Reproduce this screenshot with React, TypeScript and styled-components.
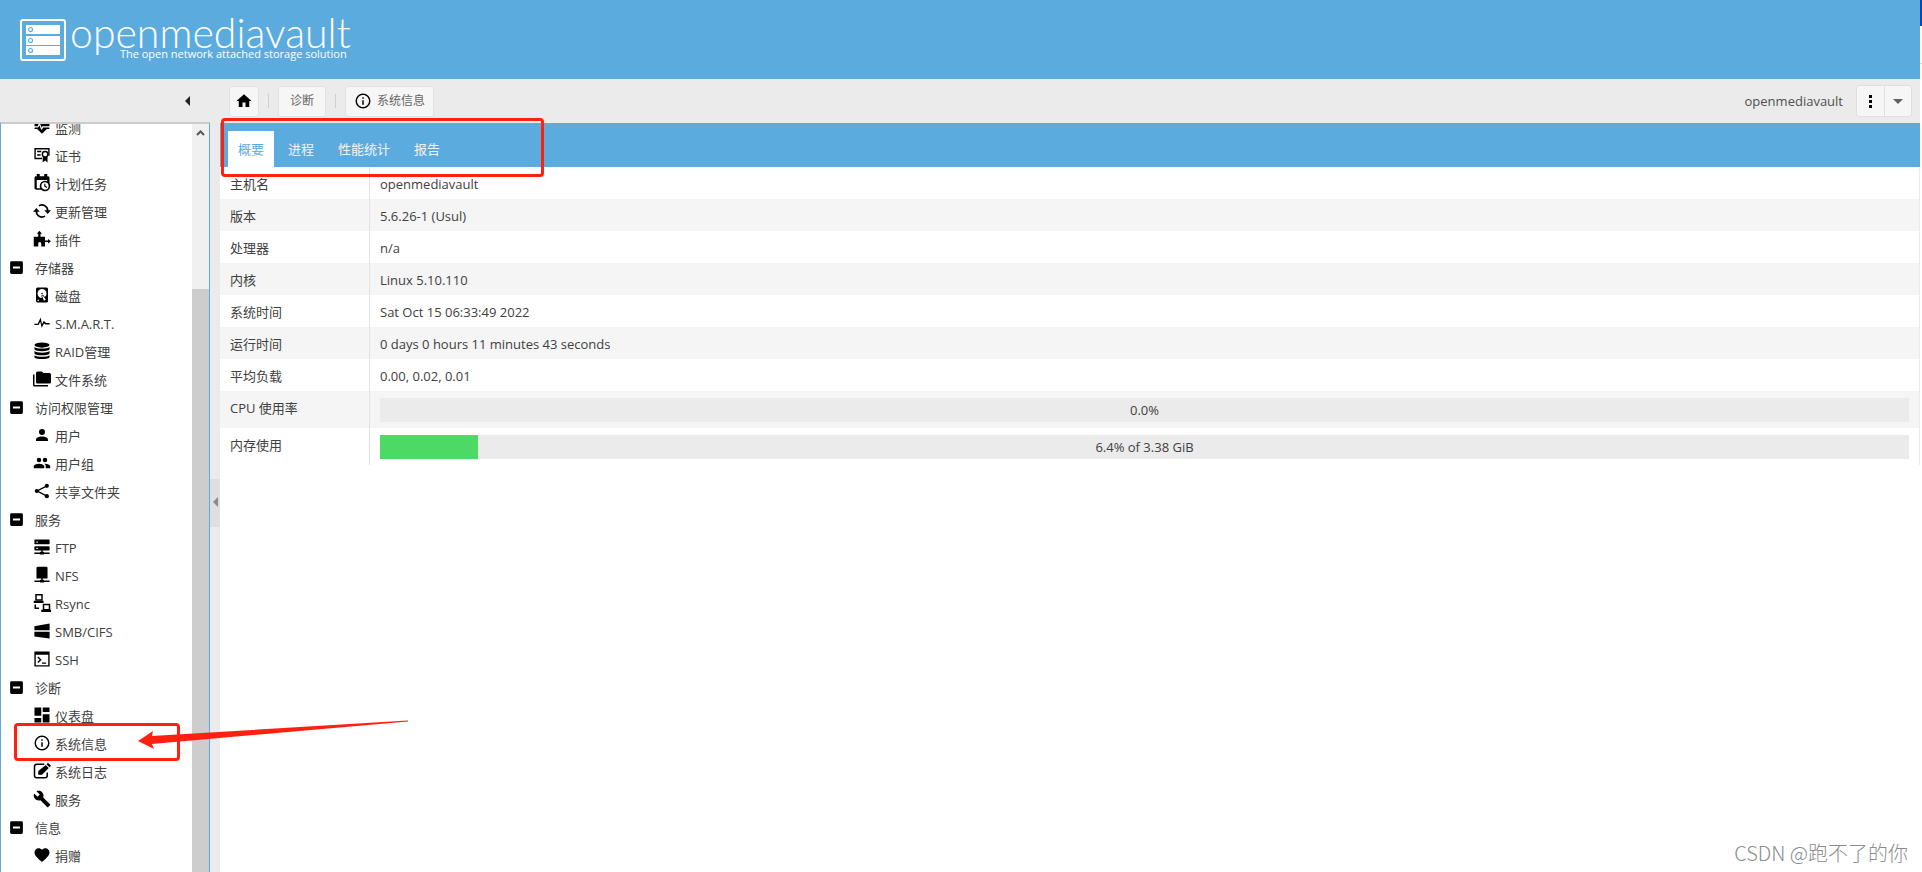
import React from "react";
import styled, { createGlobalStyle } from "styled-components";

const BLUE = "#5cabdf";
const GREY = "#ebebeb";
const RED = "#ff2010";

const GlobalStyle = createGlobalStyle`
  *, *::before, *::after { box-sizing: border-box; }
  body {
    margin: 0;
    background: #fff;
    color: #404040;
    font: 13px/20px "Open Sans", "Noto Sans CJK SC", sans-serif;
  }
  button { font: inherit; color: inherit; cursor: pointer; }
`;

const Page = styled.div`
  position: relative;
  display: flex;
  height: 100vh;
  overflow: hidden;
`;

const Viewport = styled.div`
  flex: 1;
  min-width: 0;
  display: flex;
  flex-direction: column;
`;

const WindowEdge = styled.div`
  width: 2px;
  display: flex;
  flex-direction: column;
`;

const EdgeTop = styled.div`
  height: 26px;
  background: #0848b4;
`;

const EdgeGap = styled.div`
  height: 38px;
  border-bottom: 1px solid #d8d8d8;
`;

const Header = styled.header`
  height: 79px;
  flex: none;
  display: flex;
  padding: 19px 20px;
  gap: 4px;
  background: ${BLUE};
  color: #fff;
`;

const Brand = styled.div`
  display: flex;
  flex-direction: column;
  align-items: flex-end;
`;

const BrandName = styled.div`
  font: 300 41px/28px Lato, sans-serif;
  height: 29px;
`;

const Tagline = styled.div`
  font: 11px/12px "Open Sans", sans-serif;
  padding-right: 4px;
`;

const Columns = styled.div`
  flex: 1;
  min-height: 0;
  display: flex;
`;

const LeftColumn = styled.div`
  width: 210px;
  flex: none;
  display: flex;
  flex-direction: column;
`;

const CollapseBar = styled.div`
  height: 43px;
  flex: none;
  display: flex;
  align-items: center;
  justify-content: flex-end;
  padding-right: 20px;
  background: ${GREY};
`;

const PlainButton = styled.button`
  display: flex;
  padding: 0;
  border: 0;
  background: none;
`;

const Sidebar = styled.div`
  flex: 1;
  min-height: 0;
  display: flex;
  border: 1px solid ${BLUE};
  border-top: 2px solid #ccc;
  border-bottom: 0;
`;

const TreeView = styled.nav`
  flex: 1;
  overflow: hidden;
`;

const Tree = styled.ul`
  list-style: none;
  margin: -10px 0 0;
  padding: 0;
`;

const TreeRow = styled.a<{ $group?: boolean }>`
  display: flex;
  align-items: center;
  height: 28px;
  padding-left: ${(p) => (p.$group ? 7 : 32)}px;
  gap: ${(p) => (p.$group ? 10 : 4)}px;
  color: #404040;
  text-decoration: none;
  white-space: nowrap;
  svg { margin-bottom: 2px; color: #000; flex: none; }
`;

const ScrollBar = styled.div`
  width: 17px;
  display: flex;
  flex-direction: column;
  background: #f0f0f0;
`;

const ScrollUp = styled.button`
  height: 17px;
  display: flex;
  align-items: center;
  justify-content: center;
  padding: 0;
  border: 0;
  background: none;
`;

const ScrollTrack = styled.div`
  flex: 1;
  display: flex;
  flex-direction: column;
  justify-content: flex-end;
`;

const ScrollThumb = styled.div`
  height: calc(80% - 2px);
  background: #cdcdcd;
`;

const Splitter = styled.div`
  width: 10px;
  flex: none;
  display: flex;
  flex-direction: column;
  justify-content: center;
  padding-top: 54px;
  background: ${GREY};
`;

const SplitHandle = styled.button`
  height: 48px;
  display: flex;
  align-items: center;
  justify-content: flex-end;
  padding: 0 2px 2px 0;
  border: 0;
  background: #dfdfdf;
`;

const MainColumn = styled.main`
  flex: 1;
  min-width: 0;
`;

const Toolbar = styled.div`
  height: 44px;
  display: flex;
  align-items: center;
  padding: 0 8px 0 9px;
  gap: 9px;
  background: ${GREY};
  color: #666;
`;

const Divider = styled.div`
  width: 1px;
  height: 14px;
  background: #cfcfcf;
`;

const ToolButton = styled.button<{ $pad: number }>`
  height: 31px;
  display: flex;
  align-items: center;
  gap: 5px;
  padding: 0 ${(p) => p.$pad}px;
  border: 1px solid #e3e3e3;
  border-radius: 3px;
  background: #f6f6f6;
  font-size: 12px;
  svg { color: #000; }
`;

const UserName = styled.span`
  margin-left: auto;
  padding-right: 4px;
  color: #505050;
`;

const SplitButton = styled.div`
  display: flex;
  height: 32px;
  border: 1px solid #e0e0e0;
  border-radius: 3px;
  background: #f6f6f6;
`;

const SplitPart = styled.button`
  width: 27px;
  display: flex;
  align-items: center;
  justify-content: center;
  padding: 0;
  border: 0;
  background: none;
  & + & { border-left: 1px solid #e0e0e0; }
`;

const Tabs = styled.div`
  height: 44px;
  display: flex;
  align-items: flex-end;
  gap: 4px;
  padding: 8px 8px 0;
  background: ${BLUE};
`;

const Tab = styled.button<{ $active?: boolean }>`
  height: 36px;
  padding: 0 10px;
  border: 0;
  background: ${(p) => (p.$active ? "#fff" : "transparent")};
  && { color: ${(p) => (p.$active ? BLUE : "#f3f3f3")}; }
`;

const InfoTable = styled.table`
  width: 100%;
  border-collapse: separate;
  border-spacing: 0;
  border-right: 1px solid ${GREY};
  tr:nth-child(even) { background: #f5f5f5; }
`;

const LabelCell = styled.th`
  width: 150px;
  padding: 7px 10px 5px;
  border-right: 1px solid #e3e3e3;
  font-weight: 400;
  text-align: left;
  vertical-align: top;
`;

const ValueCell = styled.td<{ $bar?: boolean }>`
  padding: ${(p) => (p.$bar ? "7px 10px 6px" : "7px 10px 5px")};
  vertical-align: top;
`;

const Progress = styled.div`
  position: relative;
  height: 24px;
  background: ${GREY};
`;

const ProgressFill = styled.div`
  height: 24px;
  background: #4cda64;
`;

const ProgressText = styled.span`
  position: absolute;
  inset: 0;
  line-height: 24px;
  text-align: center;
`;

const TabsMark = styled.div`
  position: absolute;
  left: 221px;
  top: 118px;
  width: 323px;
  height: 59px;
  border: 3px solid ${RED};
  border-radius: 4px;
  pointer-events: none;
`;

const MenuMark = styled(TabsMark)`
  left: 14px;
  top: 723px;
  width: 166px;
  height: 38px;
`;

const ArrowMark = styled.svg`
  position: absolute;
  left: 136px;
  top: 716px;
  pointer-events: none;
`;

const Watermark = styled.div`
  position: absolute;
  right: 14px;
  bottom: 4px;
  color: #8c8c8c;
  font: 300 20px/30px "Noto Sans CJK SC", sans-serif;
`;

const icons: Record<string, React.ReactNode> = {
  minus: <path d="M17,13.5H7V10.5H17M19,3H5A2,2 0 0,0 3,5V19A2,2 0 0,0 5,21H19A2,2 0 0,0 21,19V5A2,2 0 0,0 19,3Z" />,
  home: <path d="M10,20V14H14V20H19V12H22L12,3L2,12H5V20H10Z" />,
  info: <path d="M11,9H13V7H11M12,20C7.59,20 4,16.41 4,12C4,7.59 7.59,4 12,4C16.41,4 20,7.59 20,12C20,16.41 16.41,20 12,20M12,2A10,10 0 1,0 22,12A10,10 0 0,0 12,2M11,17H13V11H11V17Z" />,
  monitor: <path d="M7.5,4A5.5,5.5 0 0,0 2,9.5C2,10 2.09,10.5 2.22,11H6.3L7.57,7.63C7.87,6.83 9.05,6.75 9.43,7.63L11.5,13L12.09,11.58C12.22,11.25 12.57,11 13,11H21.78C21.91,10.5 22,10 22,9.5A5.5,5.5 0 0,0 16.5,4C14.64,4 13,4.93 12,6.34C11,4.93 9.36,4 7.5,4M3,12.5A1,1 0 0,0 2,13.5A1,1 0 0,0 3,14.5H5.44L11,20C12,20.9 12,20.9 13,20L18.56,14.5H21A1,1 0 0,0 22,13.5A1,1 0 0,0 21,12.5H13.4L12.47,14.8C12.07,15.81 10.92,15.67 10.55,14.83L8.5,9.5L7.54,11.83C7.39,12.21 7.05,12.5 6.6,12.5H3Z" />,
  cert: (
    <>
      <path d="M12 17H2V3h20v10M5 7h6M5 12h5" fill="none" stroke="currentColor" strokeWidth="2" />
      <circle cx="16.500" cy="11" r="4" fill="none" stroke="currentColor" strokeWidth="2" />
      <path d="M13 14h7v9l-3.500-3L13 23z" />
    </>
  ),
  calendar: <path d="M15,13H16.5V15.82L18.94,17.23L18.19,18.53L15,16.69V13M19,8H5V19H9.67C9.24,18.09 9,17.07 9,16A7,7 0 0,1 16,9C17.07,9 18.09,9.24 19,9.67V8M5,21C3.89,21 2,20.1 2,19V5C2,3.89 2.89,3 4,3H5V0H9V3H15V0H19V3H20A2,2 0 0,1 22,5V12.1C22.74,13.36 23,14.09 23,16A7,7 0 0,1 16,23C14.09,23 12.36,22.24 11.1,21H5M16,11.15A4.85,4.85 0 0,0 11.15,16C11.15,18.68 13.32,20.85 16,20.85A4.85,4.85 0 0,0 20.85,16C20.85,13.32 18.68,11.15 16,11.15Z" />,
  sync: (
    <>
      <path d="M8 5.200A7.500 7.500 0 0 1 19.500 12M16 18.800A7.500 7.500 0 0 1 4.500 12" fill="none" stroke="currentColor" strokeWidth="2.200" />
      <path d="M0 13l4.500-5L9 13zM15 11h9l-4.500 5z" />
    </>
  ),
  plugin: <path d="M7 9V5H5l3.500-4L12 5h-2v4h6v5h4v-2l4 3-4 3v-2h-4v6h-5v-4a2 2 0 0 0-4 0v4H1V9z" />,
  disk: <path d="M6,2H18A2,2 0 0,1 20,4V20A2,2 0 0,1 18,22H6A2,2 0 0,1 4,20V4A2,2 0 0,1 6,2M12,4A6,6 0 0,0 6,10C6,13.31 8.69,16 12.1,16L11.22,13.77C10.95,13.29 11.11,12.68 11.59,12.4L12.45,11.9C12.93,11.63 13.54,11.79 13.82,12.27L15.74,14.69C17.12,13.59 18,11.9 18,10A6,6 0 0,0 12,4M12,9A1,1 0 0,1 13,10A1,1 0 0,1 12,11A1,1 0 0,1 11,10A1,1 0 0,1 12,9M7,18A1,1 0 0,0 6,19A1,1 0 0,0 7,20A1,1 0 0,0 8,19A1,1 0 0,0 7,18M12.09,13.27L14.58,19.58L17.17,18.08L12.95,12.77L12.09,13.27Z" />,
  pulse: <path d="M1,13H5.79L10.1,4L12,13.75L14.5,8.66L17.83,12H23V14H17L14.97,12.67L11.5,19L9.5,10.31L7,15H1V13Z" />,
  raid: (
    <>
      <ellipse cx="12" cy="4" rx="10" ry="3.500" />
      <path d="M2 6.500c3 3 17 3 20 0v3.500c-3 3-17 3-20 0zM2 12c3 3 17 3 20 0v3.500c-3 3-17 3-20 0zM2 17.500c3 3 17 3 20 0v3c-3 3-17 3-20 0z" />
    </>
  ),
  folders: <path d="M22,4H14L12,2H6A2,2 0 0,0 4,4V16A2,2 0 0,0 6,18H22A2,2 0 0,0 24,16V6A2,2 0 0,0 22,4M2,6H0V20A2,2 0 0,0 2,22H20V20H2V6Z" />,
  user: <path d="M12,4A4,4 0 0,1 16,8A4,4 0 0,1 12,12A4,4 0 0,1 8,8A4,4 0 0,1 12,4M12,14C16.42,14 20,15.79 20,18V20H4V18C4,15.79 7.58,14 12,14Z" />,
  users: <path d="M16,13C15.71,13 15.38,13 15.03,13.05C16.19,13.89 17,15 17,16.5V19H23V16.5C23,14.17 18.33,13 16,13M8,13C5.67,13 1,14.17 1,16.5V19H15V16.5C15,14.17 10.33,13 8,13M8,11A3,3 0 0,0 11,8A3,3 0 0,0 8,5A3,3 0 0,0 5,8A3,3 0 0,0 8,11M16,11A3,3 0 0,0 19,8A3,3 0 0,0 16,5A3,3 0 0,0 13,8A3,3 0 0,0 16,11Z" />,
  share: (
    <>
      <path d="M19 4.500L5 12l14 7.500" fill="none" stroke="currentColor" strokeWidth="2" />
      <circle cx="19" cy="4.500" r="3" />
      <circle cx="4.500" cy="12" r="3" />
      <circle cx="19" cy="19.500" r="3" />
    </>
  ),
  ftp: <path d="M13,19H14A1,1 0 0,1 15,20H23V22H15A1,1 0 0,1 14,23H10A1,1 0 0,1 9,22H1V20H9A1,1 0 0,1 10,19H11V17H2A1,1 0 0,1 1,16V12A1,1 0 0,1 2,11H22A1,1 0 0,1 23,12V16A1,1 0 0,1 22,17H13V19M2,1H22A1,1 0 0,1 23,2V7A1,1 0 0,1 22,8H2A1,1 0 0,1 1,7V2A1,1 0 0,1 2,1M4,4V6H6V4H4M4,13V15H6V13H4Z" />,
  nfs: <path d="M6 0h12a2 2 0 0 1 2 2v15h-7v2h1a1 1 0 0 1 1 1h8v2h-8a1 1 0 0 1-1 1h-4a1 1 0 0 1-1-1H1v-2h8a1 1 0 0 1 1-1h1v-2H4V2a2 2 0 0 1 2-2z" />,
  rsync: (
    <>
      <path d="M4 1v7h8V1zM14 14v7h8v-7z" fill="none" stroke="currentColor" strokeWidth="2" />
      <path d="M1 9h13v3H1zM11 21h13v3H11zM2 14h2v4h4v2H2z" />
    </>
  ),
  smb: <path d="M1 5l22-4v10H1zM1 13h22v10L1 20z" />,
  ssh: (
    <>
      <path d="M1 1h22v22H1zM3 6v15h18V6z" fillRule="evenodd" />
      <path d="M6 9l4 4-4 4M12 18h6" fill="none" stroke="currentColor" strokeWidth="2" />
    </>
  ),
  dashboard: <path d="M13,2V8H22V2M13,22H22V11H13M2,22H11V16H2M2,13H11V2H2V13Z" />,
  log: (
    <>
      <path d="M15 3H5a3 3 0 0 0-3 3v12a3 3 0 0 0 3 3h11a3 3 0 0 0 3-3v-4" fill="none" stroke="currentColor" strokeWidth="2" />
      <path d="M20 1l4 4-2 2-4-4zM17 4l4 4-9 9H7v-5z" />
    </>
  ),
  wrench: <path d="M22.7,19L13.6,9.9C14.5,7.6 14,4.9 12.1,3C10.1,1 7.1,0.6 4.7,1.7L9,6L6,9L1.6,4.7C0.4,7.1 0.9,10.1 2.9,12.1C4.8,14 7.5,14.5 9.8,13.6L18.9,22.7C19.3,23.1 19.9,23.1 20.3,22.7L22.6,20.4C23.1,20 23.1,19.3 22.7,19Z" />,
  heart: <path d="M12,21.35L10.55,20.03C5.4,15.36 2,12.27 2,8.5C2,5.41 4.42,3 7.5,3C9.24,3 10.91,3.81 12,5.08C13.09,3.81 14.76,3 16.5,3C19.58,3 22,5.41 22,8.5C22,12.27 18.6,15.36 13.45,20.03L12,21.35Z" />,
};

/* These drawings reach the edge of their grid and need a margin round them. */
const fullBleed = ["cert", "pulse", "share", "ftp", "nfs", "smb", "ssh"];

function Icon({ name, size = 18 }: { name: string; size?: number }) {
  const box = fullBleed.includes(name) ? "-1 -1 26 26" : "0 0 24 24";
  return (
    <svg width={size} height={size} viewBox={box} fill="currentColor" aria-hidden="true">
      {icons[name]}
    </svg>
  );
}

function Logo() {
  return (
    <svg width="46" height="42" viewBox="0 0 46 42" aria-hidden="true">
      <rect x="1" y="1" width="44" height="40" rx="2" fill="none" stroke="#fff" strokeWidth="2" />
      {[6, 17, 27].map((y) => (
        <g key={y}>
          <rect x="6" y={y} width="34" height="9" fill="#fff" />
          <circle cx="10.500" cy={y + 4.5} r="2" fill="none" stroke={BLUE} strokeWidth="1.200" />
        </g>
      ))}
    </svg>
  );
}

const menu: [string, string][] = [
  ["monitor", "监测"],
  ["cert", "证书"],
  ["calendar", "计划任务"],
  ["sync", "更新管理"],
  ["plugin", "插件"],
  ["minus", "存储器"],
  ["disk", "磁盘"],
  ["pulse", "S.M.A.R.T."],
  ["raid", "RAID管理"],
  ["folders", "文件系统"],
  ["minus", "访问权限管理"],
  ["user", "用户"],
  ["users", "用户组"],
  ["share", "共享文件夹"],
  ["minus", "服务"],
  ["ftp", "FTP"],
  ["nfs", "NFS"],
  ["rsync", "Rsync"],
  ["smb", "SMB/CIFS"],
  ["ssh", "SSH"],
  ["minus", "诊断"],
  ["dashboard", "仪表盘"],
  ["info", "系统信息"],
  ["log", "系统日志"],
  ["wrench", "服务"],
  ["minus", "信息"],
  ["heart", "捐赠"],
];

const rows: { label: string; value: string; percent?: number }[] = [
  { label: "主机名", value: "openmediavault" },
  { label: "版本", value: "5.6.26-1 (Usul)" },
  { label: "处理器", value: "n/a" },
  { label: "内核", value: "Linux 5.10.110" },
  { label: "系统时间", value: "Sat Oct 15 06:33:49 2022" },
  { label: "运行时间", value: "0 days 0 hours 11 minutes 43 seconds" },
  { label: "平均负载", value: "0.00, 0.02, 0.01" },
  { label: "CPU 使用率", value: "0.0%", percent: 0 },
  { label: "内存使用", value: "6.4% of 3.38 GiB", percent: 6.4 },
];

export default function App() {
  return (
    <Page>
      <GlobalStyle />
      <Viewport>
        <Header>
          <Logo />
          <Brand>
            <BrandName>openmediavault</BrandName>
            <Tagline>The open network attached storage solution</Tagline>
          </Brand>
        </Header>
        <Columns>
          <LeftColumn>
            <CollapseBar>
              <PlainButton aria-label="Collapse navigation">
                <svg width="5" height="10" viewBox="0 0 5 10"><path d="M5 0v10L0 5z" fill="#222" /></svg>
              </PlainButton>
            </CollapseBar>
            <Sidebar>
              <TreeView>
                <Tree>
                  {menu.map(([icon, label], i) => (
                    <li key={i}>
                      <TreeRow href="#" $group={icon === "minus"}>
                        <Icon name={icon} size={icon === "minus" ? 17 : 18} />
                        {label}
                      </TreeRow>
                    </li>
                  ))}
                </Tree>
              </TreeView>
              <ScrollBar>
                <ScrollUp aria-label="Scroll up">
                  <svg width="9" height="6" viewBox="0 0 9 6"><path d="M1 5l3.500-3.500L8 5" fill="none" stroke="#555" strokeWidth="2" /></svg>
                </ScrollUp>
                <ScrollTrack><ScrollThumb /></ScrollTrack>
              </ScrollBar>
            </Sidebar>
          </LeftColumn>
          <Splitter>
            <SplitHandle aria-label="Toggle sidebar">
              <svg width="5" height="10" viewBox="0 0 5 10"><path d="M5 0v10L0 5z" fill="#8a8a8a" /></svg>
            </SplitHandle>
          </Splitter>
          <MainColumn>
            <Toolbar>
              <ToolButton $pad={5} aria-label="Home"><Icon name="home" /></ToolButton>
              <Divider />
              <ToolButton $pad={11}>诊断</ToolButton>
              <Divider />
              <ToolButton $pad={8}><Icon name="info" />系统信息</ToolButton>
              <UserName>openmediavault</UserName>
              <SplitButton>
                <SplitPart aria-label="Menu"><svg width="3" height="13" viewBox="0 0 3 13"><path d="M0 0h3v3H0zM0 5h3v3H0zM0 10h3v3H0z" /></svg></SplitPart>
                <SplitPart aria-label="More"><svg width="10" height="5" viewBox="0 0 10 5"><path d="M0 0h10L5 5z" fill="#606060" /></svg></SplitPart>
              </SplitButton>
            </Toolbar>
            <Tabs role="tablist">
              {["概要", "进程", "性能统计", "报告"].map((t, i) => (
                <Tab key={t} role="tab" aria-selected={i === 0} $active={i === 0}>{t}</Tab>
              ))}
            </Tabs>
            <InfoTable>
              <tbody>
                {rows.map((r) => (
                  <tr key={r.label}>
                    <LabelCell scope="row">{r.label}</LabelCell>
                    <ValueCell $bar={r.percent !== undefined}>
                      {r.percent === undefined ? r.value : (
                        <Progress>
                          <ProgressFill style={{ width: `${r.percent}%` }} />
                          <ProgressText>{r.value}</ProgressText>
                        </Progress>
                      )}
                    </ValueCell>
                  </tr>
                ))}
              </tbody>
            </InfoTable>
          </MainColumn>
        </Columns>
      </Viewport>
      <WindowEdge><EdgeTop /><EdgeGap /></WindowEdge>
      <TabsMark />
      <MenuMark />
      <ArrowMark width="276" height="36" viewBox="0 0 276 36" aria-hidden="true">
        <path d="M2 25L17 15L16 20L272 4.500V5.500L16 28L18 33Z" fill={RED} />
      </ArrowMark>
      <Watermark>CSDN @跑不了的你</Watermark>
    </Page>
  );
}
